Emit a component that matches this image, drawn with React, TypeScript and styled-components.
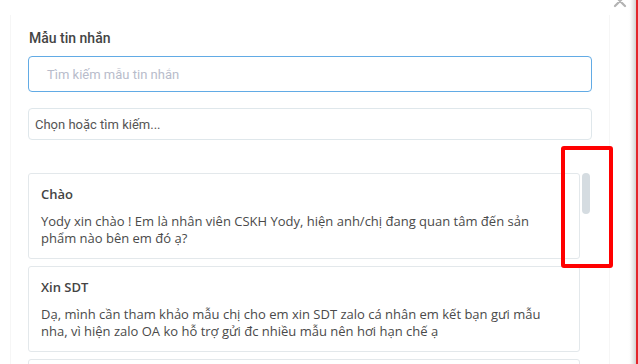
import React from "react";
import styled, { createGlobalStyle } from "styled-components";

const Global = createGlobalStyle`
  html, body { margin: 0; padding: 0; background: #fff; }
  * { box-sizing: border-box; }
`;

const Page = styled.div`
  position: relative;
  width: 638px;
  height: 364px;
  overflow: hidden;
  display: flex;
  background: #fff;
`;

const Modal = styled.div`
  position: relative;
  flex: 1;
  display: flex;
  flex-direction: column;
  padding: 15px 0 0 10px;
`;

const Edge = styled.div`
  width: 10px;
  background: linear-gradient(to right, #fff 0px, #fdfdfd 2px, #eaeaea 5px, #d2d2d2 8px);
  border-right: 2px solid #e3262b;
`;

const Close = styled.button`
  position: absolute;
  top: -6px;
  right: 1px;
  width: 14px;
  height: 14px;
  padding: 0;
  border: none;
  background: none;
  color: #b3b3b3;
  display: flex;
  align-items: center;
  justify-content: center;
`;

const Panel = styled.div`
  width: 600px;
  flex: 1;
  display: flex;
  flex-direction: column;
  padding: 13px 17px 0 17px;
  border-left: 1px solid #f6f6f6;
  border-right: 1px solid #f6f6f6;
  min-height: 0;
`;

const Title = styled.div`
  font-family: Roboto, "Noto Sans", sans-serif;
  font-size: 14px;
  font-weight: 500;
  line-height: 20px;
  color: #444;
  padding-left: 1px;
`;

const SearchBox = styled.div`
  margin-top: 8px;
  height: 36px;
  border: 1px solid #62abe5;
  border-radius: 4px;
  display: flex;
  align-items: center;
  padding-left: 18px;
  font-family: Roboto, "Noto Sans", sans-serif;
  font-size: 13px;
  color: #b8bccb;
`;

const SelectBox = styled.div`
  margin-top: 16px;
  height: 32px;
  border: 1px solid #dfe7eb;
  border-radius: 4px;
  display: flex;
  align-items: center;
  padding-left: 6px;
  font-family: Roboto, "Noto Sans", sans-serif;
  font-size: 13px;
  color: #555;
`;

const ListArea = styled.div`
  margin-top: 33px;
  flex: 1;
  display: flex;
  gap: 2px;
  min-height: 0;
  overflow: hidden;
`;

const Cards = styled.div`
  width: 553px;
  display: flex;
  flex-direction: column;
  gap: 7px;
`;

const Track = styled.div`
  width: 10px;
  display: flex;
  flex-direction: column;
`;

const Thumb = styled.div`
  width: 8px;
  height: 41px;
  border-radius: 4px;
  background: #d5dce1;
`;

const Card = styled.div`
  flex-shrink: 0;
  border: 1px solid #e3e8eb;
  border-radius: 3px;
  padding: 10px 12px 11px 12px;
  font-family: "Open Sans", sans-serif;
  font-size: 13px;
  color: #444;
`;

const CardTitle = styled.div`
  font-weight: 600;
  line-height: 20px;
  color: #444;
`;

const CardBody = styled.div`
  margin-top: 9px;
  line-height: 17px;
  color: #4a4a4a;
`;

const Annotation = styled.div`
  position: absolute;
  left: 561px;
  top: 146px;
  width: 52px;
  height: 122px;
  border: 4px solid #ff0000;
  border-radius: 3px;
`;

const templates = [
  {
    title: "Chào",
    body: "Yody xin chào ! Em là nhân viên CSKH Yody, hiện anh/chị đang quan tâm đến sản phẩm nào bên em đó ạ?",
  },
  {
    title: "Xin SDT",
    body: "Dạ, mình cần tham khảo mẫu chị cho em xin SDT zalo cá nhân em kết bạn gưi mẫu nha, vì hiện zalo OA ko hỗ trợ gửi đc nhiều mẫu nên hơi hạn chế ạ",
  },
  {
    title: "Cảm ơn",
    body: "Cảm ơn anh/chị đã quan tâm đến sản phẩm của Yody ạ.",
  },
];

export default function App() {
  return (
    <>
      <Global />
      <Page>
        <Modal>
          <Close aria-label="close">
            <svg width="14" height="14" viewBox="0 0 14 14">
              <path d="M2 2 L12 12 M12 2 L2 12" stroke="currentColor" strokeWidth="2.2" strokeLinecap="round" />
            </svg>
          </Close>
          <Panel>
            <Title>Mẫu tin nhắn</Title>
            <SearchBox>Tìm kiếm mẫu tin nhắn</SearchBox>
            <SelectBox>Chọn hoặc tìm kiếm...</SelectBox>
            <ListArea>
              <Cards>
                {templates.map((t) => (
                  <Card key={t.title}>
                    <CardTitle>{t.title}</CardTitle>
                    <CardBody>{t.body}</CardBody>
                  </Card>
                ))}
              </Cards>
              <Track>
                <Thumb />
              </Track>
            </ListArea>
          </Panel>
        </Modal>
        <Edge />
        <Annotation />
      </Page>
    </>
  );
}
